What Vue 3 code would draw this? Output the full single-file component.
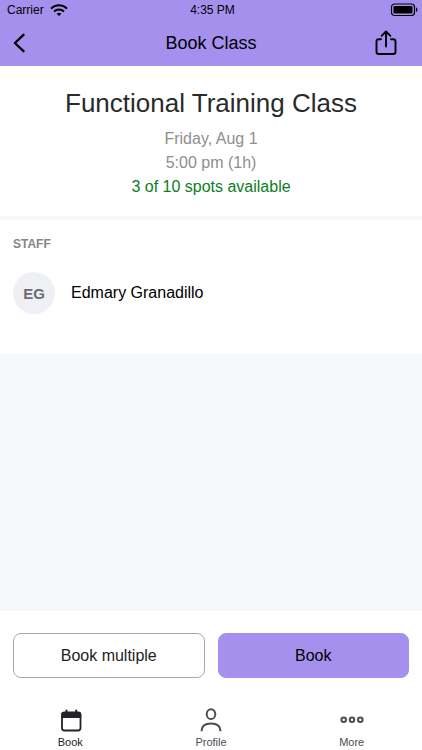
<script setup>
const session = {
  title: 'Functional Training Class',
  date: 'Friday, Aug 1',
  time: '5:00 pm (1h)',
  spots: '3 of 10 spots available',
}
const staff = [{ initials: 'EG', name: 'Edmary Granadillo' }]
</script>

<template>
  <div class="screen">
    <header class="top">
      <div class="status">
        <div class="carrier">
          <span>Carrier</span>
          <svg width="18" height="12" viewBox="0 0 18 12" fill="none" stroke="#000" stroke-width="2" aria-hidden="true">
            <path d="M1 4.6C5.4.1 12.6.1 17 4.6" />
            <path d="M4 7.6c2.900-2.700 7.100-2.700 10 0" />
            <path d="M6.600 9.700c1.400-1.200 3.400-1.200 4.800 0L9 12z" fill="#000" stroke="none" />
          </svg>
        </div>
        <span class="clock">4:35 PM</span>
        <svg class="battery" width="28" height="14" viewBox="0 0 28 14" aria-hidden="true">
          <rect x="1.500" y="1" width="23" height="11.500" rx="3" fill="none" stroke="#000" stroke-width="1.200" />
          <rect x="3.500" y="3" width="19" height="7.500" rx="1" fill="#000" />
          <path d="M26 4.600c2 .5 2 3.800 0 4.300z" fill="#000" />
        </svg>
      </div>
      <nav class="bar">
        <button class="icon-button" type="button" aria-label="Back">
          <svg width="14" height="20" viewBox="0 0 14 20" fill="none" stroke="#000" stroke-width="2.400" stroke-linecap="round" stroke-linejoin="round">
            <path d="M11.500 1.800 2.900 10l8.600 8.200" />
          </svg>
        </button>
        <h1>Book Class</h1>
        <button class="icon-button share" type="button" aria-label="Share">
          <svg width="22" height="26" viewBox="0 0 22 26" fill="none" stroke="#000" stroke-width="1.900" stroke-linecap="round" stroke-linejoin="round">
            <path d="M6 9.200H3.800Q1.500 9.200 1.500 11.500v10.200Q1.500 24 3.800 24h14.400q2.300 0 2.300-2.300V11.500q0-2.300-2.300-2.300H16" />
            <path d="M11 16.500V2M6.600 5.900 11 1.500l4.400 4.400" />
          </svg>
        </button>
      </nav>
    </header>

    <main class="content">
      <section class="summary">
        <h2>{{ session.title }}</h2>
        <p>{{ session.date }}</p>
        <p>{{ session.time }}</p>
        <p class="spots">{{ session.spots }}</p>
      </section>
      <section class="staff">
        <h3>STAFF</h3>
        <div v-for="person in staff" :key="person.name" class="person">
          <span class="avatar">{{ person.initials }}</span>
          <span>{{ person.name }}</span>
        </div>
      </section>
    </main>

    <footer class="bottom">
      <div class="actions">
        <button class="action" type="button">Book multiple</button>
        <button class="action primary" type="button">Book</button>
      </div>
      <nav class="tabs">
        <a class="tab active" href="#book">
          <svg width="24" height="26" viewBox="0 0 24 26" fill="none">
            <rect x="4" y="5.500" width="18.500" height="18" rx="2.500" stroke="#23222a" stroke-width="1.800" />
            <path d="M3.300 11V7.500Q3.300 5 5.800 5h14.900q2.500 0 2.500 2.500V11z" fill="#23222a" />
            <path d="M8.500 5.500v-2M18.200 5.500v-2" stroke="#23222a" stroke-width="2" stroke-linecap="round" />
          </svg>
          <span>Book</span>
        </a>
        <a class="tab" href="#profile">
          <svg width="24" height="26" viewBox="0 0 24 26" fill="none" stroke="#4d4c54" stroke-width="2">
            <ellipse cx="12" cy="7.200" rx="4.300" ry="4.900" />
            <path d="M2.500 24.200C2.500 18.800 6 16.400 12 16.400s9.500 2.400 9.500 7.800" />
          </svg>
          <span>Profile</span>
        </a>
        <a class="tab" href="#more">
          <svg width="24" height="26" viewBox="0 0 24 26" fill="none" stroke="#4d4c54" stroke-width="2">
            <circle cx="3.700" cy="12.700" r="2.300" />
            <circle cx="12" cy="12.700" r="2.300" />
            <circle cx="20.300" cy="12.700" r="2.300" />
          </svg>
          <span>More</span>
        </a>
      </nav>
    </footer>
  </div>
</template>

<style>
body {
  margin: 0;
}
</style>

<style scoped>
.screen {
  display: flex;
  flex-direction: column;
  min-height: 100vh;
  background: #f7f8fb;
  color: #000;
  font-family: "Liberation Sans", Arial, sans-serif;
  font-size: 16px;
}
h1,
h2,
h3,
p {
  margin: 0;
  font-weight: 400;
}
button {
  font: inherit;
  color: inherit;
  cursor: pointer;
}
svg {
  display: block;
}
.top {
  background: #a591ed;
}
.status,
.bar {
  display: grid;
  grid-template-columns: 1fr auto 1fr;
  align-items: center;
}
.status {
  height: 20px;
  padding: 0 4px 0 7px;
  font-size: 12px;
}
.carrier {
  display: flex;
  align-items: center;
  gap: 6px;
}
.battery {
  justify-self: end;
}
.bar {
  height: 46px;
  padding: 0 12px;
}
.bar h1 {
  font-size: 18px;
}
.icon-button {
  justify-self: start;
  padding: 0;
  border: 0;
  background: none;
}
.share {
  justify-self: end;
  padding-right: 13px;
}
.content {
  flex: 1;
}
.summary {
  padding: 21px 16px 17px;
  border-bottom: 4px solid #f7f8fb;
  background: #fff;
  color: #8e8e8e;
  line-height: 24px;
  text-align: center;
}
.summary h2 {
  padding-bottom: 8px;
  color: #2a2a2c;
  font-size: 26px;
  line-height: 32px;
}
.summary .spots {
  color: #0b7d24;
}
.staff {
  padding: 16px 13px 40px;
  background: #fff;
}
.staff h3 {
  padding-bottom: 20px;
  color: #858585;
  font-size: 12px;
  font-weight: 700;
  line-height: 16px;
}
.person {
  display: flex;
  align-items: center;
  gap: 16px;
}
.avatar {
  display: flex;
  align-items: center;
  justify-content: center;
  width: 42px;
  height: 42px;
  border-radius: 50%;
  background: #eff0f3;
  color: #6b6c74;
  font-size: 15px;
  font-weight: 700;
}
.bottom {
  background: #fff;
}
.actions {
  display: grid;
  grid-template-columns: 1fr 1fr;
  gap: 13px;
  padding: 22px 13px;
}
.action {
  height: 45px;
  padding: 0;
  border: 1px solid #a8a8a8;
  border-radius: 8px;
  background: #fff;
  color: #232325;
}
.action.primary {
  border-color: #a591ed;
  background: #a591ed;
  color: #000;
}
.tabs {
  display: grid;
  grid-template-columns: 1fr 1fr 1fr;
  padding: 7px 0 1px;
}
.tab {
  display: flex;
  flex-direction: column;
  align-items: center;
  gap: 2px;
  color: #4d4c54;
  font-size: 11px;
  line-height: 14px;
  text-decoration: none;
}
.tab.active {
  color: #23222a;
}
</style>
